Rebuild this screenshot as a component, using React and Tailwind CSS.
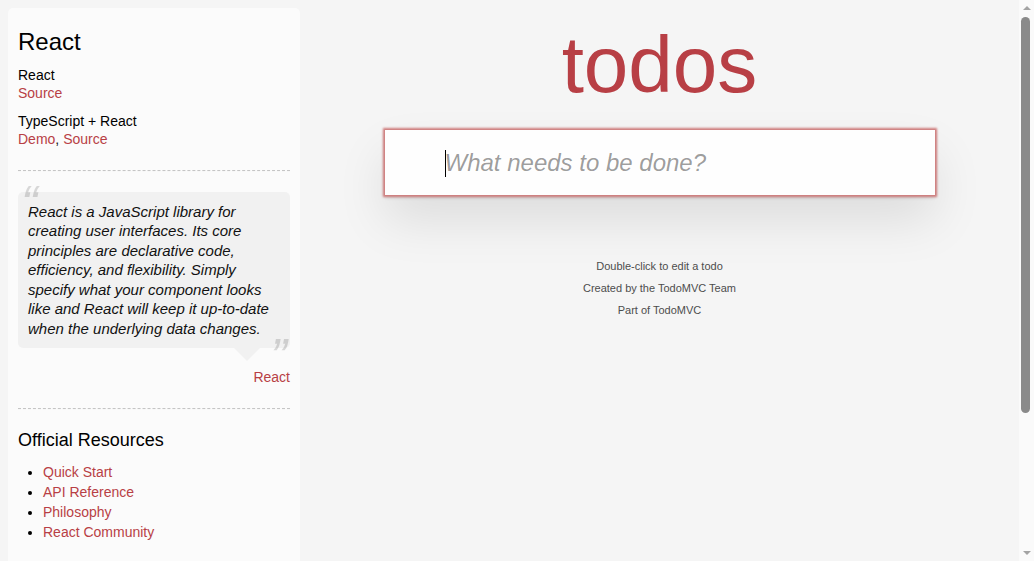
import React from "react";

const linkCls = "text-[#b83f45] no-underline";
const hrCls = "border-0 border-t border-b border-t-[#c5c5c5] border-b-[#f7f7f7] border-dashed";

function FakeScrollbar() {
  return (
    <div className="w-[15px] shrink-0 h-full bg-[#fafafa] flex flex-col items-center">
      <div className="h-[17px] w-full flex items-center justify-center">
        <div className="w-0 h-0 border-x-[4.5px] border-x-transparent border-b-[4px] border-b-[#a3a3a3] -mt-[1px]"></div>
      </div>
      <div className="w-[9px] ml-[2px] self-start h-[396px] rounded-[5px] bg-[#8a8a8a]"></div>
      <div className="flex-1"></div>
      <div className="h-[17px] w-full flex items-center justify-center">
        <div className="w-0 h-0 border-x-[4.5px] border-x-transparent border-t-[4px] border-t-[#a3a3a3] mt-[1px]"></div>
      </div>
    </div>
  );
}

export default function App() {
  return (
    <div className="h-[561px] overflow-hidden flex bg-[#f5f5f5] font-['Liberation_Sans',Arial,sans-serif] text-[14px] leading-[19.6px] text-[#111]">
      <div className="flex-1 flex items-start min-w-0">
        <aside className="ml-2 mt-2 w-[292px] h-[600px] shrink-0 p-[10px] rounded-[5px] bg-[rgba(255,255,255,0.6)]">
          <header>
            <h3 className="mt-[10px] text-[24px] leading-[1.2] font-normal text-black">React</h3>
            <div>
              <h5 className="mt-[10px] text-[14px] leading-[1.2] font-normal text-black">React</h5>
              <a href="#" className={linkCls}>Source</a>
              <h5 className="mt-[10px] text-[14px] leading-[1.2] font-normal text-black">TypeScript + React</h5>
              <a href="#" className={linkCls}>Demo</a>, <a href="#" className={linkCls}>Source</a>
            </div>
          </header>
          <hr className={"mt-[20px] " + hrCls} />
          <blockquote className="mt-[20px] relative p-[10px] rounded-[5px] bg-[rgba(0,0,0,0.04)]">
            <span className="absolute top-[-20px] left-[3px] text-[50px] leading-[1.3] italic opacity-15 text-[#111]">“</span>
            <p className="text-[15px] leading-[1.3] italic">
              React is a JavaScript library for creating user interfaces. Its core principles are declarative code, efficiency, and flexibility. Simply specify what your component looks like and React will keep it up-to-date when the underlying data changes.
            </p>
            <span className="absolute bottom-[-42px] right-[3px] text-[50px] leading-[1.3] italic opacity-15 text-[#111]">”</span>
            <span className="absolute top-full right-[30px] w-0 h-0 border-[13px] border-transparent border-t-[color:rgba(0,0,0,0.04)]"></span>
          </blockquote>
          <div className="mt-[20px] text-right leading-[19.6px]">
            <a href="#" className={linkCls}>React</a>
          </div>
          <hr className={"mt-[20px] " + hrCls} />
          <h4 className="mt-[20px] text-[18px] leading-[1.2] font-normal text-black">Official Resources</h4>
          <ul className="mt-[11px] ml-[25px] mb-[30px] list-disc text-black">
            <li className="leading-[20px]"><a href="#" className={linkCls}>Quick Start</a></li>
            <li className="leading-[20px]"><a href="#" className={linkCls}>API Reference</a></li>
            <li className="leading-[20px]"><a href="#" className={linkCls}>Philosophy</a></li>
            <li className="leading-[20px]"><a href="#" className={linkCls}>React Community</a></li>
          </ul>
        </aside>

        <main className="flex-1 flex flex-col items-center">
          <h1 className="mt-[25px] h-[80px] text-[80px] leading-[80px] font-normal text-[#b83f45] text-center">todos</h1>
          <section className="mt-[25px] w-[550px] bg-white shadow-[0_2px_4px_0_rgba(0,0,0,0.2),0_25px_50px_0_rgba(0,0,0,0.1)]">
            <div className="relative">
              <input
                className="block w-full h-[65px] pt-[16px] pb-[16px] pl-[60px] pr-[16px] text-[24px] leading-[1.4em] text-[#111] bg-[rgba(0,0,0,0.003)] outline-none shadow-[0_0_2px_2px_#cf7d7d] placeholder:italic placeholder:text-[rgba(0,0,0,0.4)] font-['Liberation_Sans',Arial,sans-serif]"
                placeholder="What needs to be done?"
              />
              <span className="absolute left-[60px] top-[20px] w-px h-[27px] bg-black"></span>
            </div>
          </section>
          <footer className="mt-[66px] flex flex-col gap-[11px] text-[11px] leading-[11px] text-[#4d4d4d] text-center">
            <p>Double-click to edit a todo</p>
            <p>Created by the TodoMVC Team</p>
            <p>Part of TodoMVC</p>
          </footer>
        </main>
      </div>
      <FakeScrollbar />
    </div>
  );
}
